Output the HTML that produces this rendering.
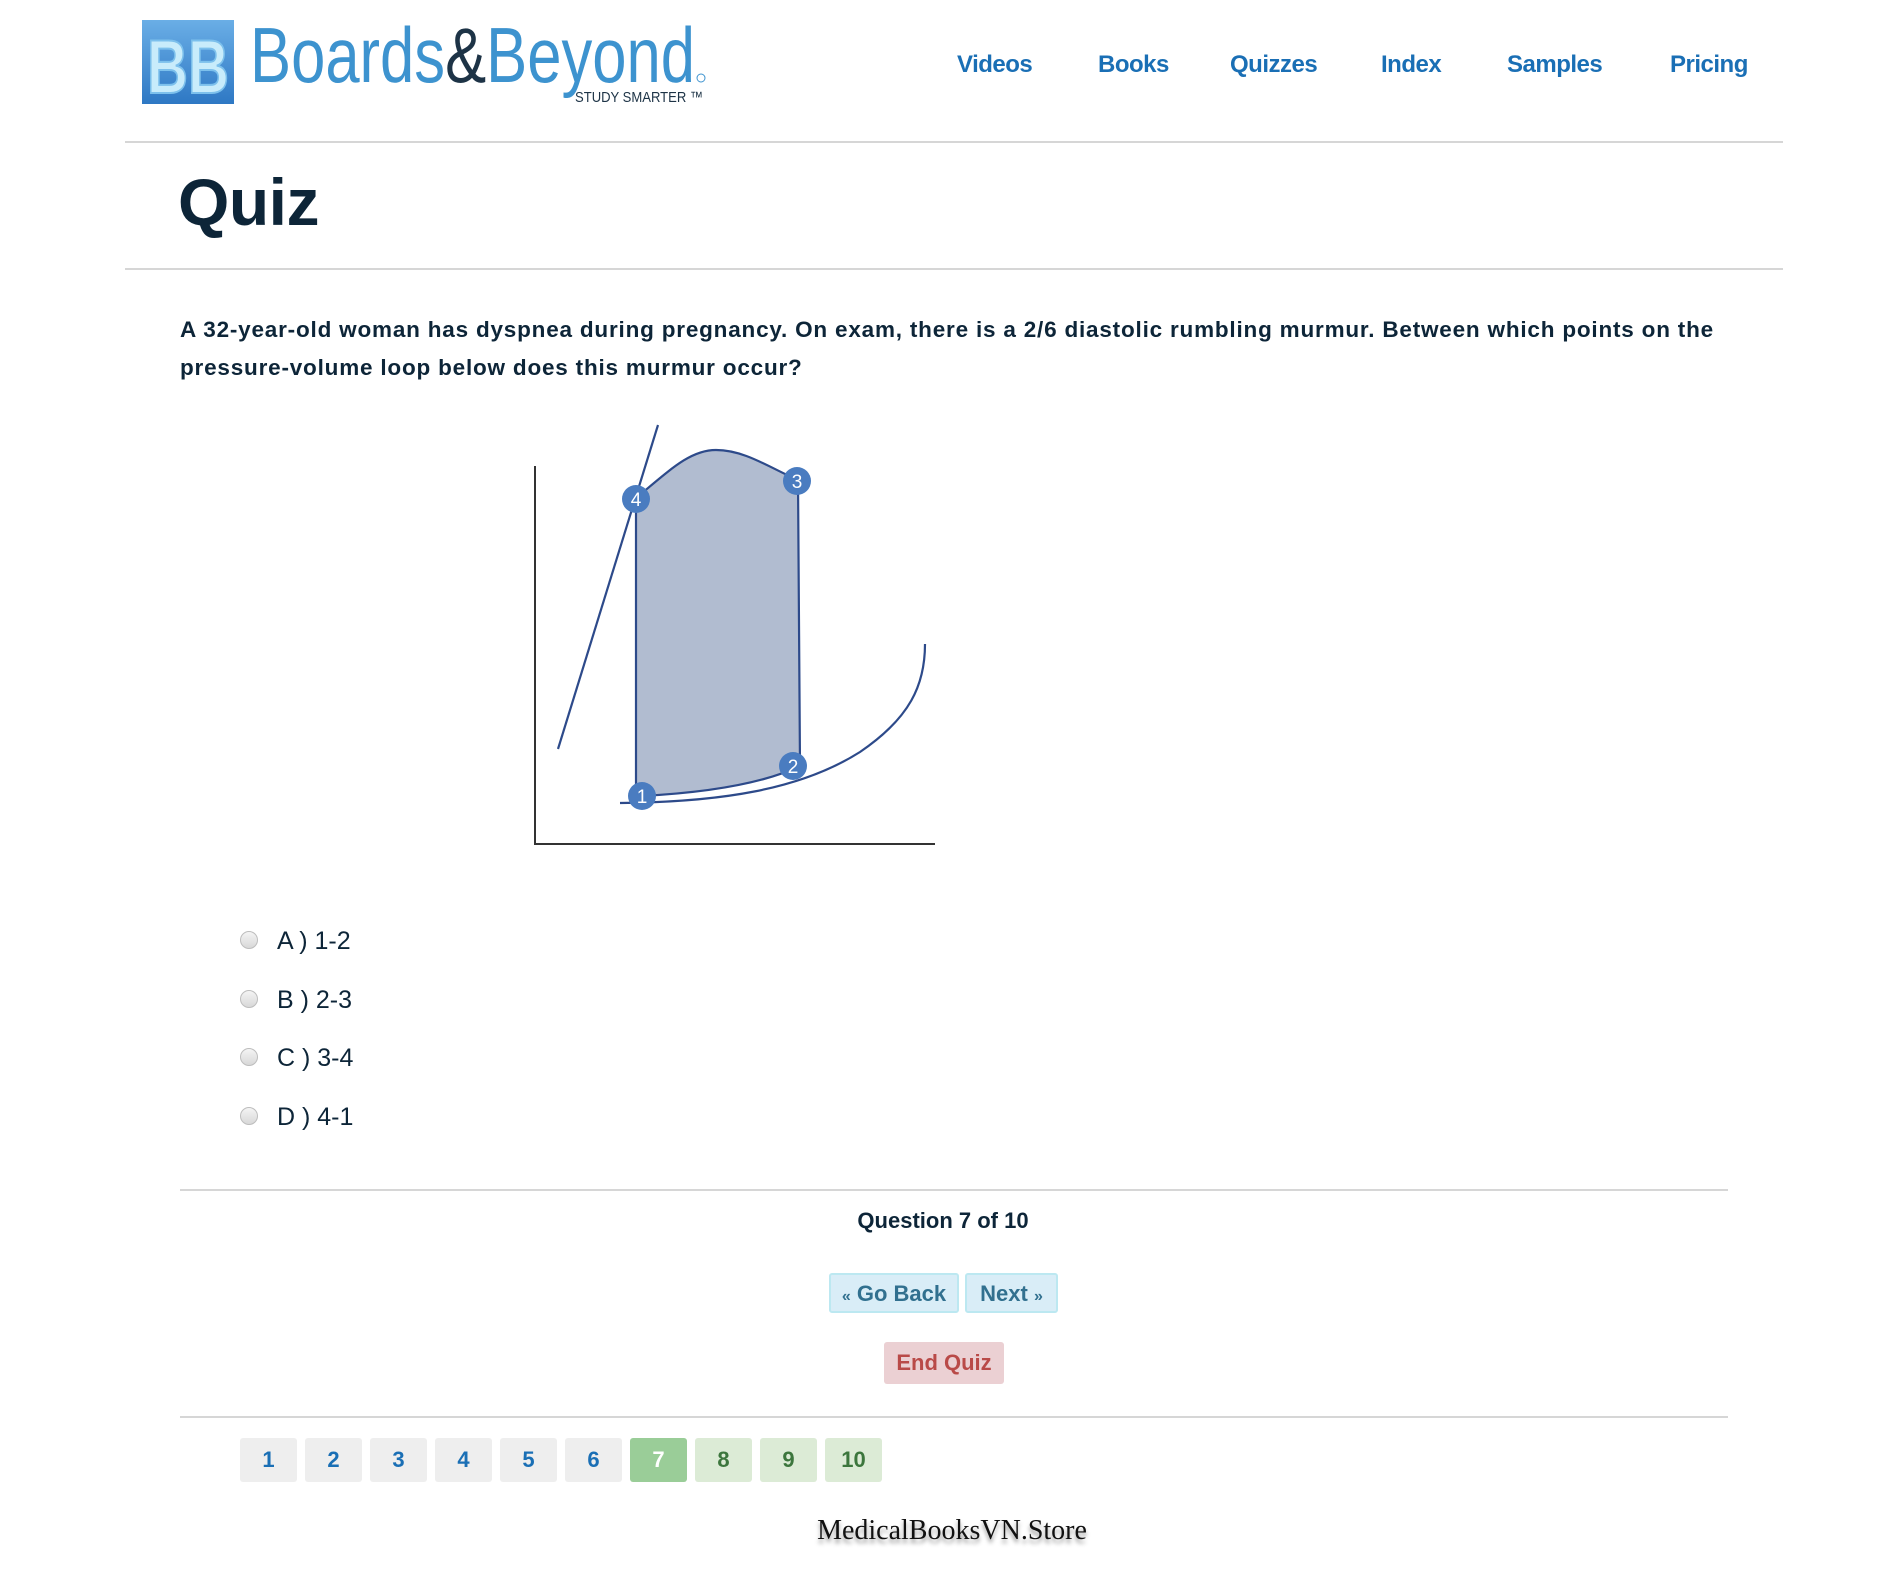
<!DOCTYPE html>
<html><head><meta charset="utf-8"><style>
*{margin:0;padding:0;box-sizing:border-box}
body{width:1899px;height:1579px;background:#fff;position:relative;overflow:hidden;font-family:"Liberation Sans",sans-serif;color:#0d2538}
.a{position:absolute}
.nav{position:absolute;top:51px;font-size:24px;color:#1a6fb5;font-weight:bold;letter-spacing:-0.5px}
.hr{position:absolute;height:2px;background:#d6d6d6}
.opt{position:absolute;left:240px;font-size:25px;height:30px;line-height:30px}
.opt i{display:inline-block;width:18px;height:18px;border-radius:50%;background:linear-gradient(#f4f4f4,#d8d8d8);border:1px solid #bdbdbd;vertical-align:middle;margin-right:19px;margin-top:-4px}
.btn{position:absolute;font-size:22px;font-weight:bold;text-align:center;border-radius:3px}
.pg{position:absolute;top:1438px;width:57px;height:44px;border-radius:3px;background:#eee;color:#1a6fb5;font-weight:bold;font-size:22px;text-align:center;line-height:44px}
</style></head><body>
<svg class="a" style="left:0;top:0" width="760" height="130">
<defs><linearGradient id="lg" x1="0" y1="0" x2="0" y2="1"><stop offset="0" stop-color="#6aaee6"/><stop offset="1" stop-color="#2e78c4"/></linearGradient></defs>
<rect x="142" y="20" width="92" height="84" fill="url(#lg)"/>
<text x="147" y="93" font-family="Liberation Sans" font-weight="bold" font-size="76" fill="#c8ecfb" stroke="#7cc0ec" stroke-width="2" textLength="82" lengthAdjust="spacingAndGlyphs">BB</text>
<text x="250" y="82" font-family="Liberation Sans" font-size="78" fill="#3d93cf" textLength="445" lengthAdjust="spacingAndGlyphs">Boards<tspan fill="#1d3346">&amp;</tspan>Beyond</text>
<text x="575" y="102" font-family="Liberation Sans" font-size="15" fill="#1d3346" textLength="128" lengthAdjust="spacingAndGlyphs">STUDY SMARTER ™</text>
<circle cx="701" cy="78" r="4" fill="none" stroke="#3d93cf" stroke-width="1"/>
</svg>
<div class="nav" style="left:957px">Videos</div>
<div class="nav" style="left:1098px">Books</div>
<div class="nav" style="left:1230px">Quizzes</div>
<div class="nav" style="left:1381px">Index</div>
<div class="nav" style="left:1507px">Samples</div>
<div class="nav" style="left:1670px">Pricing</div>
<div class="hr" style="left:125px;width:1658px;top:141px"></div>
<div class="a" style="left:178px;top:162px;font-size:66px;font-weight:bold;letter-spacing:-0.5px;color:#0d2538;line-height:80px">Quiz</div>
<div class="hr" style="left:125px;width:1658px;top:268px"></div>
<div class="a" style="left:180px;top:311px;width:1600px;font-size:22.5px;font-weight:bold;line-height:38px;color:#0d2538;letter-spacing:0.8px">A 32-year-old woman has dyspnea during pregnancy. On exam, there is a 2/6 diastolic rumbling murmur. Between which points on the<br>pressure-volume loop below does this murmur occur?</div>
<svg class="a" style="left:0;top:0" width="1899" height="900">
<g fill="none">
<path d="M535,466 V844 H935" stroke="#333" stroke-width="2"/>
<path d="M636,796 V498 C670,470 690,450 716,450 C745,450 770,468 798,480 L800,766 C760,785 700,793 642,796 Z" fill="#b1bcd0" stroke="#2d4a8a" stroke-width="2.2"/>
<path d="M558,749 L658,425" stroke="#2d4a8a" stroke-width="2.2"/>
<path d="M620,803 C720,802 800,790 860,752 C910,718 925,685 925,644" stroke="#2d4a8a" stroke-width="2.2"/>
</g>
<g fill="#4a7cc0" font-family="Liberation Sans" font-size="19" text-anchor="middle">
<circle cx="642" cy="796" r="14"/><circle cx="793" cy="766" r="14"/><circle cx="797" cy="481" r="14"/><circle cx="636" cy="499" r="14"/>
<g fill="#fff"><text x="642" y="803">1</text><text x="793" y="773">2</text><text x="797" y="488">3</text><text x="636" y="506">4</text></g>
</g>
</svg>
<div class="opt" style="top:926px"><i></i>A ) 1-2</div>
<div class="opt" style="top:985px"><i></i>B ) 2-3</div>
<div class="opt" style="top:1043px"><i></i>C ) 3-4</div>
<div class="opt" style="top:1102px"><i></i>D ) 4-1</div>
<div class="hr" style="left:180px;width:1548px;top:1189px"></div>
<div class="a" style="left:0;width:1886px;text-align:center;top:1208px;font-size:22px;font-weight:bold;color:#0d2538">Question 7 of 10</div>
<div class="btn" style="left:829px;top:1273px;width:130px;height:40px;line-height:38px;background:#d9edf7;border:2px solid #bce8f1;color:#31708f"><span style="font-size:16px">«</span> Go Back</div>
<div class="btn" style="left:965px;top:1273px;width:93px;height:40px;line-height:38px;background:#d9edf7;border:2px solid #bce8f1;color:#31708f">Next <span style="font-size:16px">»</span></div>
<div class="btn" style="left:884px;top:1342px;width:120px;height:42px;line-height:42px;background:#ebd0d3;color:#b94a48">End Quiz</div>
<div class="hr" style="left:180px;width:1548px;top:1416px"></div>
<div class="pg" style="left:240px">1</div>
<div class="pg" style="left:305px">2</div>
<div class="pg" style="left:370px">3</div>
<div class="pg" style="left:435px">4</div>
<div class="pg" style="left:500px">5</div>
<div class="pg" style="left:565px">6</div>
<div class="pg" style="left:630px;background:#9acd98;color:#fff">7</div>
<div class="pg" style="left:695px;background:#dcebd6;color:#3c763d">8</div>
<div class="pg" style="left:760px;background:#dcebd6;color:#3c763d">9</div>
<div class="pg" style="left:825px;background:#dcebd6;color:#3c763d">10</div>
<div class="a" style="left:0;width:1904px;text-align:center;top:1515px;font-family:'Liberation Serif',serif;font-size:28px;color:#111;text-shadow:0 4px 4px #999">MedicalBooksVN.Store</div>
</body></html>
